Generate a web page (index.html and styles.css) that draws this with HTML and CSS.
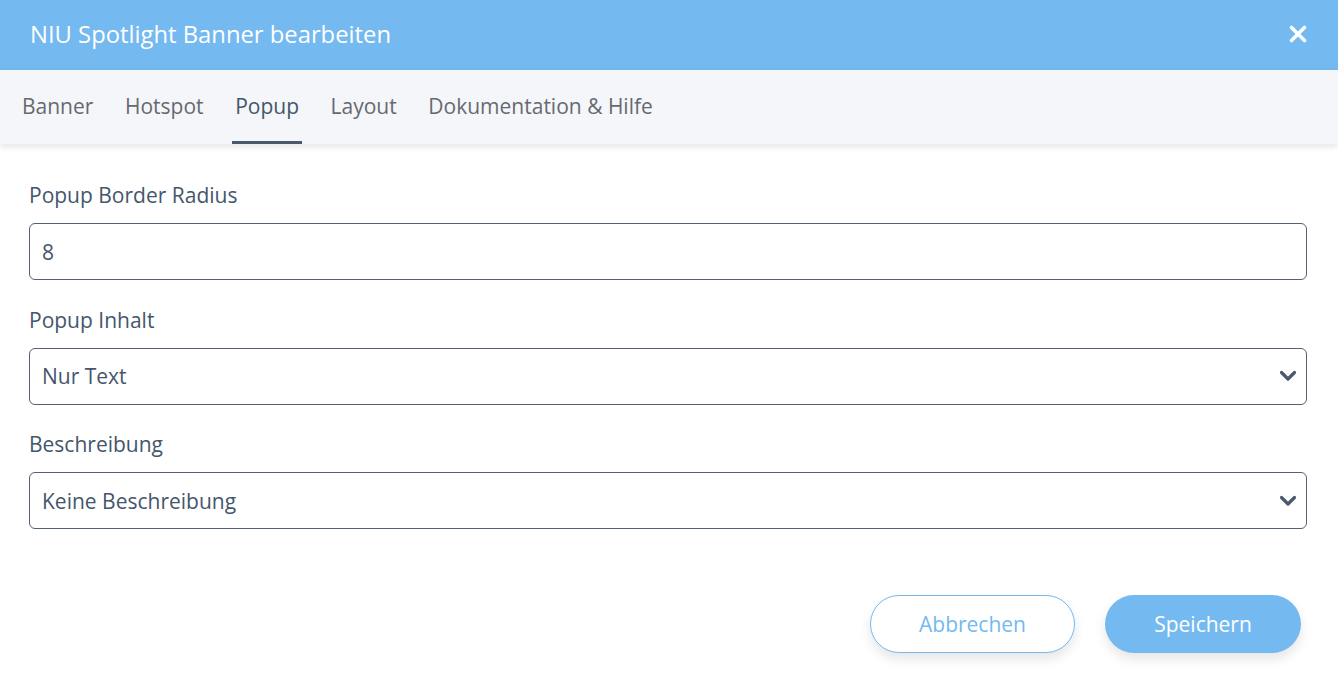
FILE: index.html
```html
<!DOCTYPE html>
<html lang="de">
<head>
<meta charset="utf-8">
<title>NIU Spotlight Banner bearbeiten</title>
<link rel="stylesheet" href="styles.css">
</head>
<body>
<div class="modal">
  <header class="header">
    <h1 class="title">NIU Spotlight Banner bearbeiten</h1>
    <button class="close" aria-label="Schließen">
      <svg width="20" height="20" viewBox="0 0 20 20"><path d="M3.5 3.5 L16.5 16.5 M16.5 3.5 L3.5 16.5" stroke="#fff" stroke-width="3.6" stroke-linecap="round"/></svg>
    </button>
  </header>
  <nav class="tabs">
    <a class="tab">Banner</a>
    <a class="tab">Hotspot</a>
    <a class="tab active">Popup</a>
    <a class="tab">Layout</a>
    <a class="tab">Dokumentation &amp; Hilfe</a>
  </nav>
  <main class="content">
    <div class="field">
      <label class="label">Popup Border Radius</label>
      <div class="control">8</div>
    </div>
    <div class="field">
      <label class="label">Popup Inhalt</label>
      <div class="control select">Nur Text
        <svg class="chev" width="18" height="12" viewBox="0 0 18 12"><path d="M2.5 2.5 L9 9 L15.5 2.5" fill="none" stroke="#4a5a6b" stroke-width="3.2" stroke-linecap="round" stroke-linejoin="round"/></svg>
      </div>
    </div>
    <div class="field">
      <label class="label">Beschreibung</label>
      <div class="control select">Keine Beschreibung
        <svg class="chev" width="18" height="12" viewBox="0 0 18 12"><path d="M2.5 2.5 L9 9 L15.5 2.5" fill="none" stroke="#4a5a6b" stroke-width="3.2" stroke-linecap="round" stroke-linejoin="round"/></svg>
      </div>
    </div>
  </main>
  <footer class="footer">
    <button class="btn btn-outline">Abbrechen</button>
    <button class="btn btn-primary">Speichern</button>
  </footer>
</div>
</body>
</html>
```
FILE: styles.css
```css
* { box-sizing: border-box; }
html, body { margin: 0; padding: 0; background: #fff; }
body { font-family: "Open Sans", "Noto Sans", sans-serif; color: #44566c; }
.modal { width: 1338px; height: 692px; display: flex; flex-direction: column; }
.header {
  height: 70px; background: #74b9f0; display: flex; align-items: center;
  justify-content: space-between; padding: 0 30px 2px 30px;
}
.title { margin: 0; font-size: 23.8px; font-weight: 400; color: #fff; }
.close { background: none; border: 0; padding: 0; width: 20px; height: 20px; display: flex; }
.tabs {
  height: 74px; background: #f5f6fa; display: flex; align-items: stretch;
  padding: 0 0 0 22px;
  box-shadow: 0 3px 6px rgba(0,0,0,0.10);
  position: relative; z-index: 1;
}
.tab {
  display: flex; align-items: center; padding: 0 15.8px; font-size: 21px; color: #666a70;
  border-bottom: 3px solid transparent; padding-top: 1px;
}
.tab:first-child { padding-left: 0; }
.tab.active { color: #44566c; border-bottom-color: #4a5a6b; padding-left: 3px; padding-right: 3px; margin: 0 12.8px; }
.content { padding: 37px 31px 0 29px; display: flex; flex-direction: column; gap: 25.5px; }
.field { display: flex; flex-direction: column; }
.label { font-size: 21px; color: #44566c; line-height: 28px; margin-bottom: 14px; }
.control {
  height: 57px; border: 1px solid #52606f; border-radius: 6px; display: flex; align-items: center;
  padding: 0 12px; font-size: 21px; color: #44566c;
}
.select { justify-content: space-between; padding-right: 9px; }
.chev { display: block; }
.footer { display: flex; justify-content: flex-end; gap: 30px; padding: 66px 37px 0 0; }
.btn {
  height: 58px; border-radius: 29px; font-family: inherit; font-size: 21px; cursor: pointer;
  box-shadow: 0 6px 12px rgba(0,0,0,0.10);
}
.btn-outline { width: 205px; background: #fff; border: 1px solid #74b9f0; color: #74b9f0; }
.btn-primary { width: 196px; background: #74b9f0; border: 0; color: #fff; }
```
